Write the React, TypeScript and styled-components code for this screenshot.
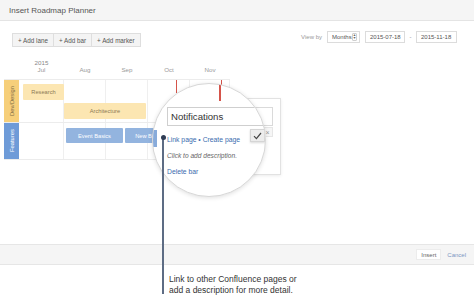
import styled, { createGlobalStyle } from "styled-components";

const GlobalStyle = createGlobalStyle`
  html, body {
    margin: 0;
    padding: 0;
    background: #fff;
    font-family: "Liberation Sans", Arial, sans-serif;
  }
  * { box-sizing: border-box; }
`;

const Page = styled.div`
  position: relative;
  width: 474px;
  height: 297px;
  overflow: hidden;
`;

const Header = styled.header`
  height: 21px;
  display: flex;
  align-items: center;
  padding-left: 9px;
  background: #f5f5f5;
  border-bottom: 1px solid #e4e4e4;
  font-size: 8px;
  color: #555;
`;

const Body = styled.main`
  height: 223px;
`;

const Toolbar = styled.div`
  display: flex;
  justify-content: space-between;
  align-items: flex-start;
  padding: 12px 17px 0 12px;
`;

const ButtonGroup = styled.div`
  display: flex;
`;

const ToolButton = styled.div`
  height: 14px;
  padding: 0 5px;
  display: flex;
  align-items: center;
  background: #f4f4f4;
  border: 1px solid #dedede;
  margin-left: -1px;
  font-size: 6.3px;
  color: #555;
  &:first-child { margin-left: 0; }
`;

const ViewControls = styled.div`
  display: flex;
  align-items: center;
  margin-top: -2px;
  font-size: 6px;
  color: #999;
`;

const ViewLabel = styled.span`
  margin-right: 5px;
`;

const Field = styled.div<{ $w: number }>`
  width: ${(p) => p.$w}px;
  height: 12px;
  display: flex;
  align-items: center;
  justify-content: space-between;
  padding: 0 2px 0 4px;
  background: #fff;
  border: 1px solid #dcdcdc;
  color: #555;
  font-size: 6px;
  white-space: nowrap;
`;

const SelectArrow = styled.span`
  width: 5px;
  height: 8px;
  flex: none;
  display: flex;
  flex-direction: column;
  align-items: center;
  justify-content: center;
  border: 1px solid #cfcfcf;
  border-radius: 1px;
  font-size: 3.5px;
  line-height: 3px;
  color: #666;
`;

const Dash = styled.span`
  width: 11px;
  text-align: center;
  color: #888;
`;

const Gap = styled.span<{ $w: number }>`
  width: ${(p) => p.$w}px;
`;

const Timeline = styled.section`
  margin: 12px 0 0 4px;
`;

const COLS = "15px 45px 42px 42px 42px 40px";

const ScaleRow = styled.div`
  display: grid;
  grid-template-columns: ${COLS};
  font-size: 6.2px;
  color: #999;
  text-align: center;
`;

const YearLabel = styled.div`
  grid-column: 2;
  line-height: 7px;
  color: #888;
`;

const MonthLabel = styled.div`
  line-height: 8px;
  height: 13px;
`;

const Lanes = styled.div`
  border-top: 1px solid #ececec;
  width: 226px;
`;

const Lane = styled.div<{ $h: number }>`
  display: flex;
  height: ${(p) => p.$h}px;
  border-bottom: 1px solid #ececec;
`;

const LaneHeader = styled.div<{ $bg: string; $fg: string }>`
  width: 15px;
  flex: none;
  background: ${(p) => p.$bg};
  color: ${(p) => p.$fg};
  font-size: 5.8px;
  display: flex;
  align-items: center;
  justify-content: center;
  writing-mode: vertical-rl;
  transform: rotate(180deg);
`;

const Track = styled.div<{ $pad: number }>`
  position: relative;
  flex: 1;
  display: flex;
  flex-direction: column;
  gap: 3px;
  padding-top: ${(p) => p.$pad}px;
`;

const GridLines = styled.div`
  position: absolute;
  inset: 0;
  display: grid;
  grid-template-columns: 45px 42px 42px 42px 40px;
`;

const GridCell = styled.div`
  border-right: 1px solid #efefef;
`;

const BarRow = styled.div<{ $h: number }>`
  position: relative;
  height: ${(p) => p.$h}px;
`;

const Bar = styled.div<{ $kind: "yellow" | "blue" }>`
  position: absolute;
  top: 0;
  bottom: 0;
  display: flex;
  align-items: center;
  justify-content: center;
  overflow: hidden;
  white-space: nowrap;
  border-radius: 1px;
  font-size: 5.7px;
  background: ${(p) => (p.$kind === "yellow" ? "#fce6b2" : "#93b4df")};
  color: ${(p) => (p.$kind === "yellow" ? "#8c7a55" : "#fff")};
`;

const Marker = styled.div`
  position: absolute;
  top: 0;
  width: 1px;
  background: #d5534a;
`;

const Footer = styled.footer`
  height: 21px;
  display: flex;
  align-items: center;
  justify-content: flex-end;
  padding-right: 8px;
  background: #f5f5f5;
  border-top: 1px solid #e6e6e6;
  border-bottom: 1px solid #e6e6e6;
  font-size: 6px;
`;

const InsertButton = styled.div`
  height: 11px;
  padding: 0 4px;
  display: flex;
  align-items: center;
  background: #fff;
  border: 1px solid #ececec;
  color: #666;
`;

const CancelLink = styled.span`
  margin-left: 6px;
  color: #7b96c2;
`;

const Caption = styled.p`
  margin: 0;
  padding: 9px 0 0 169px;
  font-size: 8.5px;
  line-height: 11px;
  color: #333;
`;

/* bar editor popup, drawn over the timeline */
const SmallPopup = styled.div`
  position: absolute;
  left: 200px;
  top: 98px;
  width: 81px;
  height: 77px;
  background: #fff;
  border: 1px solid #e2e2e2;
  box-shadow: 0 1px 3px rgba(0, 0, 0, 0.08);
`;

const SmallInput = styled.div`
  position: absolute;
  left: 8px;
  right: 7px;
  top: 8px;
  height: 19px;
  border: 1px solid #dadada;
`;

const SmallCancel = styled.div`
  position: absolute;
  right: 7px;
  top: 28px;
  width: 11px;
  height: 10px;
  display: flex;
  align-items: center;
  justify-content: center;
  background: #f6f6f6;
  border: 1px solid #e6e6e6;
  font-size: 7px;
  color: #999;
`;

const Magnifier = styled.div`
  position: absolute;
  left: 152px;
  top: 83px;
  width: 114px;
  height: 114px;
  border-radius: 50%;
  overflow: hidden;
  background: #fff;
  border: 1px solid #d8d8d8;
  box-shadow: 0 1px 4px rgba(0, 0, 0, 0.12);
`;

const MagContent = styled.div`
  position: relative;
  padding: 23px 0 0 14px;
`;

const MagMarker = styled.div`
  position: absolute;
  left: 66px;
  top: 0;
  width: 2px;
  height: 17px;
  background: #d5534a;
`;

const MagBarEdge = styled.div`
  position: absolute;
  left: 0;
  top: 46px;
  width: 4px;
  height: 17px;
  background: #88abda;
`;

const MagInput = styled.div`
  position: relative;
  width: 110px;
  height: 19px;
  display: flex;
  align-items: center;
  padding-left: 3px;
  border: 1px solid #cfcfcf;
  font-size: 9.6px;
  color: #333;
`;

const SaveButton = styled.div`
  position: absolute;
  left: 82px;
  top: 21px;
  width: 15px;
  height: 13px;
  display: flex;
  align-items: center;
  justify-content: center;
  background: #ececec;
  border: 1px solid #d5d5d5;
  box-shadow: 0 1px 2px rgba(0, 0, 0, 0.15);
`;

const Links = styled.div`
  margin-top: 9px;
  font-size: 6.8px;
  line-height: 10px;
  color: #3b6cae;
`;

const Hint = styled.div`
  margin-top: 6px;
  font-size: 6.6px;
  line-height: 10px;
  font-style: italic;
  color: #666;
`;

const DeleteLink = styled.div`
  margin-top: 6px;
  font-size: 6.8px;
  line-height: 10px;
  color: #3b6cae;
`;

const PinDot = styled.div`
  position: absolute;
  left: 161px;
  top: 135px;
  width: 5px;
  height: 5px;
  border-radius: 50%;
  background: #2f3d55;
`;

const PinLine = styled.div`
  position: absolute;
  left: 162px;
  top: 138px;
  width: 2px;
  height: 156px;
  background: #5d6c84;
`;

const months = ["Jul", "Aug", "Sep", "Oct", "Nov"];

type BarData = { label: string; left: number; width: number };

const devRows: BarData[][] = [
  [{ label: "Research", left: 4, width: 41 }],
  [{ label: "Architecture", left: 45, width: 82 }],
];

const featureRows: BarData[][] = [
  [
    { label: "Event Basics", left: 47, width: 57 },
    { label: "New Basics", left: 106, width: 50 },
  ],
];

function Grid() {
  return (
    <GridLines>
      {months.map((m) => (
        <GridCell key={m} />
      ))}
    </GridLines>
  );
}

export default function App() {
  return (
    <Page>
      <GlobalStyle />
      <Header>Insert Roadmap Planner</Header>
      <Body>
        <Toolbar>
          <ButtonGroup>
            <ToolButton>+ Add lane</ToolButton>
            <ToolButton>+ Add bar</ToolButton>
            <ToolButton>+ Add marker</ToolButton>
          </ButtonGroup>
          <ViewControls>
            <ViewLabel>View by</ViewLabel>
            <Field $w={33}>
              <span>Months</span>
              <SelectArrow>
                <span>▲</span>
                <span>▼</span>
              </SelectArrow>
            </Field>
            <Gap $w={5} />
            <Field $w={40}>2015-07-18</Field>
            <Dash>-</Dash>
            <Field $w={41}>2015-11-18</Field>
          </ViewControls>
        </Toolbar>

        <Timeline>
          <ScaleRow>
            <YearLabel>2015</YearLabel>
          </ScaleRow>
          <ScaleRow>
            <div />
            {months.map((m) => (
              <MonthLabel key={m}>{m}</MonthLabel>
            ))}
          </ScaleRow>
          <Lanes>
            <Lane $h={43}>
              <LaneHeader $bg="#f6cf7a" $fg="#7d6a45">Dev/Design</LaneHeader>
              <Track $pad={4}>
                <Grid />
                <Marker style={{ left: 157, height: 13 }} />
                <Marker style={{ left: 202, height: 6 }} />
                {devRows.map((row, i) => (
                  <BarRow key={i} $h={16}>
                    {row.map((b) => (
                      <Bar key={b.label} $kind="yellow" style={{ left: b.left, width: b.width }}>
                        {b.label}
                      </Bar>
                    ))}
                  </BarRow>
                ))}
              </Track>
            </Lane>
            <Lane $h={37}>
              <LaneHeader $bg="#6e9bd8" $fg="#fff">Features</LaneHeader>
              <Track $pad={5}>
                <Grid />
                {featureRows.map((row, i) => (
                  <BarRow key={i} $h={15}>
                    {row.map((b) => (
                      <Bar key={b.label} $kind="blue" style={{ left: b.left, width: b.width }}>
                        {b.label}
                      </Bar>
                    ))}
                  </BarRow>
                ))}
              </Track>
            </Lane>
          </Lanes>
        </Timeline>
      </Body>
      <Footer>
        <InsertButton>Insert</InsertButton>
        <CancelLink>Cancel</CancelLink>
      </Footer>
      <Caption>
        Link to other Confluence pages or
        <br />
        add a description for more detail.
      </Caption>

      <SmallPopup>
        <SmallInput />
        <SmallCancel>×</SmallCancel>
      </SmallPopup>

      <Magnifier>
        <MagMarker />
        <MagBarEdge />
        <MagContent>
          <MagInput>
            Notifications
            <SaveButton>
              <svg width="9" height="8" viewBox="0 0 9 8">
                <path d="M1 4.2 L3.4 6.6 L8 1" fill="none" stroke="#444" strokeWidth="1.2" />
              </svg>
            </SaveButton>
          </MagInput>
          <Links>Link page • Create page</Links>
          <Hint>Click to add description.</Hint>
          <DeleteLink>Delete bar</DeleteLink>
        </MagContent>
      </Magnifier>

      <PinLine />
      <PinDot />
    </Page>
  );
}
